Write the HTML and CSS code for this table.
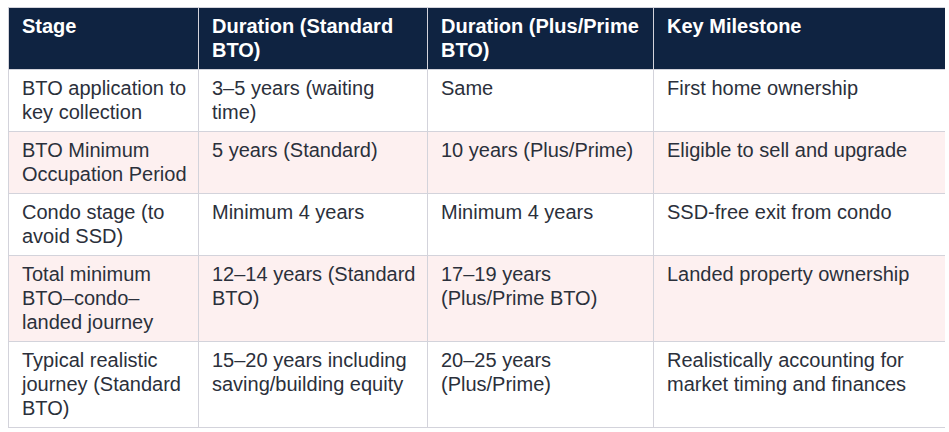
FILE: index.html
```
<!DOCTYPE html>
<html>
<head>
<meta charset="utf-8">
<link rel="stylesheet" href="styles.css">
</head>
<body>
<table class="journey">
  <colgroup>
    <col class="c1"><col class="c2"><col class="c3"><col class="c4">
  </colgroup>
  <thead>
    <tr>
      <th>Stage</th>
      <th>Duration (Standard BTO)</th>
      <th>Duration (Plus/Prime BTO)</th>
      <th>Key Milestone</th>
    </tr>
  </thead>
  <tbody>
    <tr>
      <td>BTO application to key collection</td>
      <td>3–5 years (waiting time)</td>
      <td>Same</td>
      <td>First home ownership</td>
    </tr>
    <tr class="alt">
      <td>BTO Minimum Occupation Period</td>
      <td>5 years (Standard)</td>
      <td>10 years (Plus/Prime)</td>
      <td>Eligible to sell and upgrade</td>
    </tr>
    <tr>
      <td>Condo stage (to avoid SSD)</td>
      <td>Minimum 4 years</td>
      <td>Minimum 4 years</td>
      <td>SSD-free exit from condo</td>
    </tr>
    <tr class="alt">
      <td>Total minimum BTO–condo–landed journey</td>
      <td>12–14 years (Standard BTO)</td>
      <td>17–19 years (Plus/Prime BTO)</td>
      <td>Landed property ownership</td>
    </tr>
    <tr>
      <td>Typical realistic journey (Standard BTO)</td>
      <td>15–20 years including saving/building equity</td>
      <td>20–25 years (Plus/Prime)</td>
      <td>Realistically accounting for market timing and finances</td>
    </tr>
  </tbody>
</table>
</body>
</html>
```
FILE: styles.css
```
body {
  margin: 7px 4px 0 8px;
  background: #ffffff;
  font-family: "Liberation Sans", Arial, sans-serif;
}
.journey {
  width: 937px;
  border-collapse: collapse;
  table-layout: fixed;
  font-size: 20px;
  line-height: 24px;
  color: #2b303b;
}
.c1 { width: 190px; }
.c2 { width: 229px; }
.c3 { width: 226px; }
.c4 { width: 292px; }
.journey th,
.journey td {
  border: 1px solid #d3d3db;
  padding: 6px 4px 7px 13px;
  text-align: left;
  vertical-align: top;
}
.journey th {
  background: #0f2341;
  color: #ffffff;
  font-weight: bold;
}
.journey tr.alt td {
  background: #fdf0f0;
}
```
